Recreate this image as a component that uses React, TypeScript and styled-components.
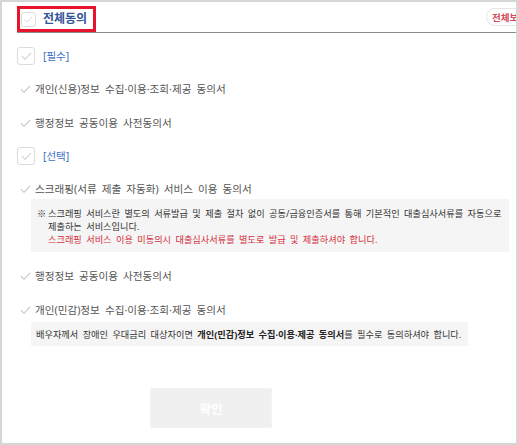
import React from 'react';
import styled, { createGlobalStyle } from 'styled-components';

const GlobalStyle = createGlobalStyle`
  html, body {
    margin: 0;
    padding: 0;
    background: #fff;
  }
  body {
    font-family: "Noto Sans", "Noto Sans CJK KR", sans-serif;
    color: #555;
  }
`;

const Frame = styled.div`
  width: 518px;
  height: 445px;
  box-sizing: border-box;
  border: 2px solid #d6d6d6;
  overflow: hidden;
  background: #fff;
`;

const Panel = styled.div`
  width: 546px;
  box-sizing: border-box;
  padding-left: 15px;
`;

const Header = styled.div`
  display: flex;
  align-items: flex-start;
  justify-content: space-between;
  height: 31px;
  padding-top: 4px;
  box-sizing: border-box;
  border-bottom: 1px solid #8c8c8c;
`;

const TitleGroup = styled.label`
  display: flex;
  align-items: center;
  gap: 7px;
  height: 20px;
  padding: 0 6px 0 1px;
  border: 3px solid #e8132c;
`;

const Box = styled.span<{ $size: number }>`
  display: inline-flex;
  align-items: center;
  justify-content: center;
  width: ${(p) => p.$size}px;
  height: ${(p) => p.$size}px;
  box-sizing: border-box;
  border: 1px solid #dcdcdc;
  border-radius: 3px;
  background: #fff;
  flex-shrink: 0;
`;

const Title = styled.span`
  font-size: 12px;
  line-height: 14px;
  font-weight: 700;
  color: #34549a;
`;

const ViewAll = styled.button`
  display: inline-flex;
  align-items: center;
  height: 18px;
  width: 62px;
  margin-top: 2px;
  padding: 0 0 0 5px;
  border: 1px solid #e6e6e6;
  border-radius: 10px;
  background: #fff;
  font-family: inherit;
  font-size: 9.5px;
  font-weight: 700;
  color: #d34a5c;
  white-space: nowrap;
`;

const List = styled.div`
  display: flex;
  flex-direction: column;
  gap: 14px;
  padding-top: 14px;
`;

const SectionRow = styled.div`
  display: flex;
  align-items: center;
  gap: 8px;
  height: 18px;
`;

const SectionLabel = styled.span`
  font-size: 10.5px;
  line-height: 12px;
  color: #3f70c2;
`;

const Row = styled.div`
  display: flex;
  align-items: center;
  gap: 4px;
  height: 20px;
  padding-left: 3px;
`;

const RowText = styled.span`
  font-size: 10.6px;
  line-height: 12px;
  word-spacing: 2.3px;
  color: #555;
  white-space: nowrap;
`;

const Notice = styled.div<{ $pull: number }>`
  display: flex;
  width: fit-content;
  max-width: 478px;
  margin: ${(p) => -p.$pull}px 0 0 14px;
  padding: ${(p) => (p.$pull > 13 ? '8px 2px 6px 6px' : '6px 7px 5px 5px')};
  box-sizing: border-box;
  background: #f5f5f5;
  font-size: 9.2px;
  line-height: 13px;
  word-spacing: 2px;
  color: #333;
`;

const Mark = styled.span`
  width: 11px;
  flex-shrink: 0;
  font-family: "Noto Sans CJK KR", sans-serif;
`;

const NoticeBody = styled.div`
  display: flex;
  flex-direction: column;
`;

const Warn = styled.span`
  color: #d4303c;
`;

const Strong = styled.strong`
  font-weight: 700;
  color: #222;
`;

const Plain = styled.span`
  white-space: nowrap;
`;

const Footer = styled.div`
  display: flex;
  margin-top: 42px;
  padding-left: 133px;
`;

const Confirm = styled.button`
  width: 122px;
  height: 40px;
  border: 1px solid #f3f3f3;
  border-radius: 2px;
  background: #f0f0f0;
  font-family: inherit;
  font-size: 12.5px;
  font-weight: 700;
  color: #fff;
`;

const Check = ({ size = 11, color = '#c4c4c4' }: { size?: number; color?: string }) => (
  <svg width={size} height={size * 0.75} viewBox="0 0 12 9" fill="none">
    <path d="M1 4.6 L4.4 8 L11 1" stroke={color} strokeWidth="1.1" />
  </svg>
);

const Section = ({ label }: { label: string }) => (
  <SectionRow>
    <Box $size={18}>
      <Check size={11} color="#cfcfcf" />
    </Box>
    <SectionLabel>{label}</SectionLabel>
  </SectionRow>
);

const Item = ({ text }: { text: string }) => (
  <Row>
    <Check size={11} />
    <RowText>{text}</RowText>
  </Row>
);

export default function App() {
  return (
    <>
      <GlobalStyle />
      <Frame>
        <Panel>
          <Header>
            <TitleGroup>
              <Box $size={15}>
                <Check size={9} color="#d4d4d4" />
              </Box>
              <Title>전체동의</Title>
            </TitleGroup>
            <ViewAll>전체보기</ViewAll>
          </Header>
          <List>
            <Section label="[필수]" />
            <Item text="개인(신용)정보 수집·이용·조회·제공 동의서" />
            <Item text="행정정보 공동이용 사전동의서" />
            <Section label="[선택]" />
            <Item text="스크래핑(서류 제출 자동화) 서비스 이용 동의서" />
            <Notice $pull={14}>
              <Mark>※</Mark>
              <NoticeBody>
                <span>
                  스크래핑 서비스란 별도의 서류발급 및 제출 절차 없이 공동/금융인증서를 통해 기본적인 대출심사서류를 자동으로
                  제출하는 서비스입니다.
                </span>
                <Warn>스크래핑 서비스 이용 미동의시 대출심사서류를 별도로 발급 및 제출하셔야 합니다.</Warn>
              </NoticeBody>
            </Notice>
            <Item text="행정정보 공동이용 사전동의서" />
            <Item text="개인(민감)정보 수집·이용·조회·제공 동의서" />
            <Notice $pull={12}>
              <Plain>
                배우자께서 장애인 우대금리 대상자이면 <Strong>개인(민감)정보 수집·이용·제공 동의서</Strong>를 필수로
                동의하셔야 합니다.
              </Plain>
            </Notice>
          </List>
          <Footer>
            <Confirm>확인</Confirm>
          </Footer>
        </Panel>
      </Frame>
    </>
  );
}
